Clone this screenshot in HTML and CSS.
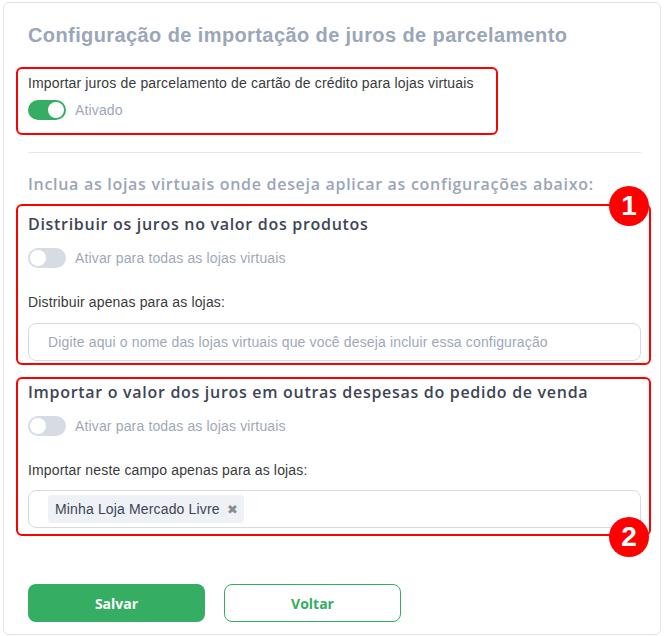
FILE: index.html
```html
<!DOCTYPE html>
<html lang="pt-BR">

<head>
    <meta charset="UTF-8">
    <meta name="viewport" content="width=device-width, initial-scale=1.0">
    <title>Juros de parcelamento</title>
    <link rel="stylesheet" href="styles.css">
</head>

<body>
    <div class="card">
        <h1 class="title">Configuração de importação de juros de parcelamento</h1>

        <!-- importar juros -->
        <div class="mark mark-small">
            <div class="label">Importar juros de parcelamento de cartão de crédito para lojas virtuais</div>
            <div class="switch-row">
                <span class="switch on"><span class="knob"></span></span>
                <span class="switch-text">Ativado</span>
            </div>
        </div>

        <hr class="divider">

        <h2 class="subtitle">Inclua as lojas virtuais onde deseja aplicar as configurações abaixo:</h2>

        <!-- bloco 1 -->
        <div class="mark mark-one">
            <span class="badge badge-top">1</span>
            <h3 class="section-title">Distribuir os juros no valor dos produtos</h3>
            <div class="switch-row">
                <span class="switch"><span class="knob"></span></span>
                <span class="switch-text">Ativar para todas as lojas virtuais</span>
            </div>
            <div class="label field-label">Distribuir apenas para as lojas:</div>
            <div class="field">
                <span class="placeholder">Digite aqui o nome das lojas virtuais que você deseja incluir essa configuração</span>
            </div>
        </div>

        <!-- bloco 2 -->
        <div class="mark mark-two">
            <span class="badge badge-bottom">2</span>
            <h3 class="section-title">Importar o valor dos juros em outras despesas do pedido de venda</h3>
            <div class="switch-row">
                <span class="switch"><span class="knob"></span></span>
                <span class="switch-text">Ativar para todas as lojas virtuais</span>
            </div>
            <div class="label field-label">Importar neste campo apenas para as lojas:</div>
            <div class="field field-tags">
                <span class="tag">Minha Loja Mercado Livre <span class="tag-x">&#10006;</span></span>
            </div>
        </div>

        <div class="actions">
            <button class="btn btn-save">Salvar</button>
            <button class="btn btn-back">Voltar</button>
        </div>
    </div>
</body>

</html>
```

FILE: styles.css
```css
body {
    margin: 0;
    padding: 2px 4px 2px 3px;
    background: #fff;
    font-family: "Liberation Sans", Arial, sans-serif;
    letter-spacing: 0.15px;
}

.card {
    border: 1px solid #e3e3e3;
    border-radius: 6px;
    padding: 20px 19px 11px 24px;
    height: 600px;
}

.title {
    margin: 0;
    font-size: 20px;
    line-height: 24px;
    font-weight: bold;
    letter-spacing: 0.4px;
    color: #9ba6b8;
}

.mark {
    position: relative;
    border: 2px solid #f00;
    border-radius: 6px;
    margin-left: -12px;
    margin-right: -10px;
    padding-left: 10px;
    padding-right: 8px;
}

.mark-small {
    display: inline-block;
    margin-top: 20px;
    padding: 6px 22px 13px 10px;
}

.label {
    font-size: 14px;
    line-height: 17px;
    color: #3a3a3a;
}

.switch-row {
    display: flex;
    align-items: center;
    margin-top: 8px;
}

.switch {
    position: relative;
    width: 38px;
    height: 20px;
    border-radius: 10px;
    background: #d7dce4;
    flex: none;
}

.switch .knob {
    position: absolute;
    top: 2px;
    left: 2px;
    width: 16px;
    height: 16px;
    border-radius: 50%;
    background: #fff;
}

.switch.on {
    background: #35ad62;
}

.switch.on .knob {
    left: 20px;
}

.switch-text {
    margin-left: 9px;
    font-size: 14px;
    color: #a0a8b8;
}

.divider {
    border: 0;
    border-top: 1px solid #e4e7ec;
    margin: 17px 0 0 0;
}

.subtitle,
.section-title {
    margin: 0;
    font-family: "Open Sans", sans-serif;
    font-weight: 600;
    font-size: 16px;
    line-height: 20px;
    letter-spacing: 0.7px;
}

.subtitle {
    margin-top: 21px;
    color: #9ba5b7;
}

.section-title {
    color: #3d4555;
}

.mark-one {
    margin-top: 10px;
    padding-top: 8px;
    padding-bottom: 2px;
}

.mark-two {
    margin-top: 12px;
    padding-top: 3px;
    padding-bottom: 6px;
}

.mark-one .switch-row,
.mark-two .switch-row {
    margin-top: 14px;
}

.field-label {
    margin-top: 26px;
}

.field {
    margin-top: 12px;
    height: 36px;
    border: 1px solid #d6dae1;
    border-radius: 8px;
    display: flex;
    align-items: center;
    padding: 0 19px;
}

.mark-two .field {
    margin-top: 11px;
}

.placeholder {
    font-size: 14px;
    color: #a0a8b8;
}

.field-tags {
    padding-left: 19px;
}

.tag {
    display: inline-flex;
    align-items: center;
    height: 28px;
    padding: 0 6px 0 7px;
    background: #eef1f6;
    border-radius: 4px;
    font-size: 14px;
    color: #3d4555;
}

.tag-x {
    margin-left: 7px;
    font-size: 13px;
    color: #8c8c8c;
}

.badge {
    position: absolute;
    right: 0;
    width: 40px;
    height: 40px;
    border-radius: 50%;
    background: #f00;
    color: #fff;
    font-size: 28px;
    font-weight: bold;
    line-height: 40px;
    text-align: center;
}

.badge-top {
    top: -20px;
}

.badge-bottom {
    bottom: -23px;
}

.actions {
    display: flex;
    gap: 19px;
    margin-top: 48px;
}

.btn {
    width: 177px;
    height: 38px;
    border-radius: 8px;
    font-family: "Open Sans", sans-serif;
    font-weight: 700;
    font-size: 14px;
    cursor: pointer;
}

.btn-save {
    background: #35ad62;
    border: 0;
    color: #fff;
}

.btn-back {
    background: #fff;
    border: 1px solid #35ad62;
    color: #35ad62;
}
```
